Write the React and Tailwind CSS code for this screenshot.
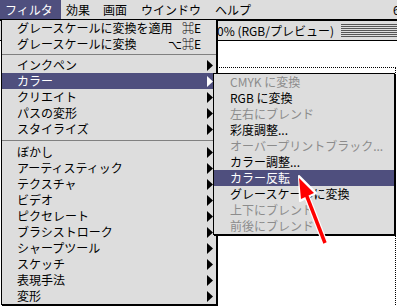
import React from 'react';

const font = { fontFamily: '"Noto Sans CJK JP", "DejaVu Sans", sans-serif' };

// right-pointing submenu triangle
const Arrow = ({ white }) => (
    <svg width="6" height="11" viewBox="0 0 6 11" className="shrink-0">
        <polygon points="0,0 6,5.5 0,11" fill={white ? '#ffffff' : '#000000'} />
    </svg>
);

const Row = ({ label, sub, shortcut, active, disabled }) => (
    <div className={`flex h-[16px] items-center pl-[15px] pr-[3px] text-[12px] leading-[16px] ${active ? 'bg-[#4f4f7e] text-white' : disabled ? 'text-[#8c8c8c]' : 'text-black'}`}>
        <span className="flex-1 whitespace-nowrap">{label}</span>
        {shortcut && <span className="pr-[12px] whitespace-nowrap">{shortcut}</span>}
        {sub && <Arrow white={active} />}
    </div>
);

const Sep = ({ h, top }) => (
    <div className={`${h} ${top}`}>
        <div className="h-px bg-[#808080]" />
    </div>
);

const SubRow = ({ label, active, disabled }) => (
    <div className={`h-[16px] pl-[16px] text-[12px] leading-[16px] whitespace-nowrap ${active ? 'bg-[#4f4f7e] text-white' : disabled ? 'text-[#8c8c8c]' : 'text-black'}`}>
        {label}
    </div>
);

const group2 = ['インクペン', 'カラー', 'クリエイト', 'パスの変形', 'スタイライズ'];
const group3 = ['ぼかし', 'アーティスティック', 'テクスチャ', 'ビデオ', 'ピクセレート', 'ブラシストローク', 'シャープツール', 'スケッチ', '表現手法', '変形'];

const colorItems = [
    { label: 'CMYK に変換', disabled: true },
    { label: 'RGB に変換' },
    { label: '左右にブレンド', disabled: true },
    { label: '彩度調整...' },
    { label: 'オーバープリントブラック...', disabled: true },
    { label: 'カラー調整...' },
    { label: 'カラー反転', active: true },
    { label: 'グレースケールに変換' },
    { label: '上下にブレンド', disabled: true },
    { label: '前後にブレンド', disabled: true },
];

export default function App() {
    return (
        <div className="relative w-[397px] h-[306px] overflow-hidden bg-white" style={font}>
            {/* menu bar */}
            <div className="flex h-[20px] border-b border-black bg-[#dddddd] text-[12px] leading-[19px] text-black">
                <div className="w-[61px] pl-[5px] bg-[#4f4f7e] text-white">フィルタ</div>
                <div className="w-[37px] pl-[5px]">効果</div>
                <div className="w-[38px] pl-[5px]">画面</div>
                <div className="w-[74px] pl-[5px]">ウインドウ</div>
                <div className="w-[60px] pl-[5px]">ヘルプ</div>
                <div className="ml-auto w-[4px] overflow-hidden">6</div>
            </div>

            {/* document window */}
            <div className="border-t border-b border-black bg-[#dddddd] flex h-[21px] items-center">
                <div className="w-[217px] shrink-0" />
                <span className="text-[12px] leading-[19px] whitespace-nowrap text-black">0% (RGB/プレビュー)</span>
                <div className="ml-[7px] flex-1 h-[14px] bg-[repeating-linear-gradient(to_bottom,#555_0,#555_1px,transparent_1px,transparent_2px)]" />
            </div>
            <div className="bg-white">
                <div className="mt-[26px] ml-[120px] mr-[1px] h-[240px] border-t border-r border-dotted border-black" />
            </div>

            {/* filter menu */}
            <div className="absolute left-[1px] top-[19px] w-[216px] border border-black bg-[#dddddd] shadow-[1px_1px_0_#000]">
                <Row label="グレースケールに変換を適用" shortcut="⌘E" />
                <Row label="グレースケールに変換" shortcut="⌥⌘E" />
                <Sep h="h-[5px]" top="pt-[2px]" />
                {group2.map((l) => <Row key={l} label={l} sub active={l === 'カラー'} />)}
                <Sep h="h-[7px]" top="pt-[3px]" />
                {group3.map((l) => <Row key={l} label={l} sub />)}
            </div>

            {/* color submenu */}
            <div className="absolute left-[213px] top-[73px] w-[182px] border border-black bg-[#dddddd] shadow-[1px_1px_0_#000]">
                {colorItems.map((it) => <SubRow key={it.label} {...it} />)}
            </div>

            {/* red pointer arrow */}
            <svg className="absolute inset-0 pointer-events-none" width="397" height="306">
                <line x1="325" y1="243" x2="306" y2="194" stroke="#ffffff" strokeWidth="6" />
                <polygon points="299,176 316,193 300,201" fill="#ffffff" stroke="#ffffff" strokeWidth="2" strokeLinejoin="round" />
                <line x1="325" y1="243" x2="306" y2="194" stroke="#ff0000" strokeWidth="3.5" />
                <polygon points="299,178 314,193 301,199" fill="#ff0000" />
            </svg>
        </div>
    );
}
